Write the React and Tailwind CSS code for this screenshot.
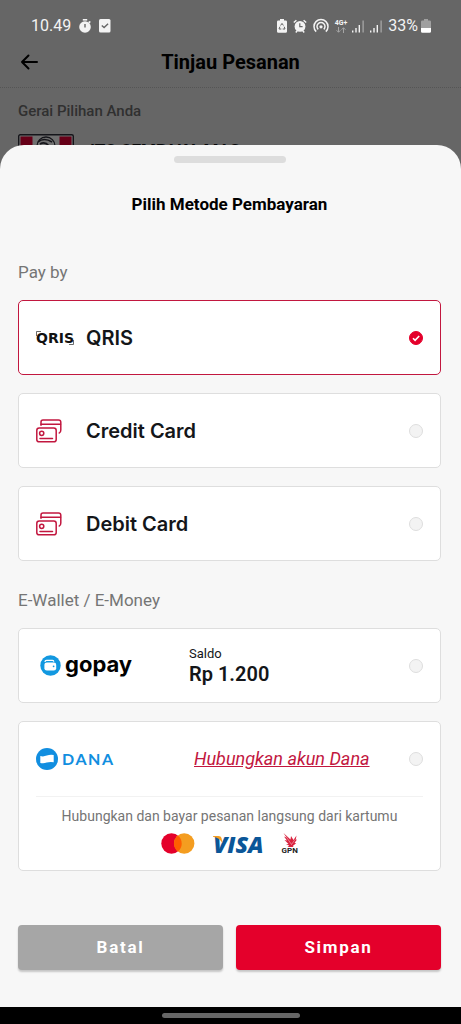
import React, { useState } from "react";

const cardMethods = [
  { id: "qris", name: "QRIS" },
  { id: "credit", name: "Credit Card" },
  { id: "debit", name: "Debit Card" },
];

function SignalIcon() {
  return (
    <svg width="13" height="13" viewBox="0 0 13 13" fill="#f3f3f3">
      <rect x="0" y="10.500" width="1.400" height="2" />
      <rect x="3.300" y="8" width="1.400" height="4.500" />
      <rect x="6.600" y="5" width="1.400" height="7.500" />
      <rect x="10.300" y="0.500" width="1.700" height="12" opacity="0.35" />
    </svg>
  );
}

function StatusBar() {
  return (
    <div className="flex items-center justify-between h-[52px] pl-[31px] pr-[30px] text-[#f3f3f3]">
      <div className="flex items-center gap-2">
        <span className="text-base">10.49</span>
        <svg width="12" height="14" viewBox="0 0 12 14">
          <circle cx="6" cy="8" r="5.8" fill="#f3f3f3" />
          <rect x="3.8" y="0" width="4.4" height="1.6" fill="#f3f3f3" />
          <rect x="9.6" y="2" width="1.8" height="2" fill="#f3f3f3" transform="rotate(20 10 3)" />
          <path d="M6 5v3.4" stroke="#666" strokeWidth="1.4" />
        </svg>
        <svg width="12" height="14" viewBox="0 0 12 14">
          <rect width="11.5" height="13.6" rx="1.5" fill="#f3f3f3" />
          <path d="M2.8 6.4l2.3 2.2 4-3.8" fill="none" stroke="#666" strokeWidth="1.4" />
        </svg>
      </div>
      <div className="flex items-center gap-[5px]">
        <svg width="10" height="14" viewBox="0 0 10 14">
          <path d="M3 0h4v1.4h1.6Q10 1.4 10 2.8v9.6q0 1.4-1.4 1.4H1.4Q0 13.800 0 12.400V2.800Q0 1.400 1.400 1.400H3z" fill="#f3f3f3" />
          <path d="M3.600 6.500L5 4.400l1.400 2.100M7.200 7.700l.8 2.300H5.700M4.300 10H2l.9-2.300" fill="none" stroke="#666" strokeWidth="1" />
        </svg>
        <svg className="ml-px" width="14" height="14" viewBox="0 0 14 14">
          <circle cx="7" cy="7.400" r="5.400" fill="#f3f3f3" />
          <path d="M.8 3.500L3.400 1.200M13.200 3.500L10.600 1.200M2.800 13.500l1.400-1.700M11.200 13.500l-1.400-1.700" stroke="#f3f3f3" strokeWidth="1.500" />
          <path d="M6.800 4.200v3.500h2.800" fill="none" stroke="#666" strokeWidth="1.200" />
        </svg>
        <svg width="18" height="16" viewBox="0 0 18 16" fill="none" stroke="#f3f3f3" strokeWidth="1.500">
          <path d="M4.200 13.600A7 7 0 1 1 13.800 13.600" />
          <path d="M6.200 11.400A4 4 0 1 1 11.800 11.400" />
          <circle cx="9" cy="8.800" r="1.600" fill="#f3f3f3" stroke="none" />
        </svg>
        <div className="flex flex-col items-center">
          <span className="text-[7px] leading-[7px] font-bold">4G+</span>
          <svg width="10" height="6" viewBox="0 0 10 6" fill="none" stroke="#a5a5a5" strokeWidth="1">
            <path d="M2.500 0v5M.6 3.300l1.900 2 1.900-2M7.500 6V1M5.600 2.700l1.900-2 1.900 2" />
          </svg>
        </div>
        <SignalIcon />
        <SignalIcon />
        <span className="text-base flex items-center gap-[3px]">
          33%
          <svg width="10" height="14" viewBox="0 0 10 14">
            <path d="M3 0h4v1.400h1.600Q10 1.400 10 2.800V9H0V2.800Q0 1.400 1.400 1.400H3z" fill="#a0a0a0" />
            <path d="M0 9h10v3.400q0 1.400-1.400 1.400H1.400Q0 13.800 0 12.400z" fill="#fff" />
          </svg>
        </span>
      </div>
    </div>
  );
}

// the page that stays dimmed behind the sheet
function OrderPage() {
  return (
    <div className="bg-[#666666]">
      <StatusBar />
      <header className="flex items-center h-9 px-5 pb-4 border-b border-dotted border-[#555555]">
        <button type="button" aria-label="Kembali">
          <svg width="19" height="16" viewBox="0 0 19 16" fill="none" stroke="black" strokeWidth="2" strokeLinecap="round" strokeLinejoin="round">
            <path d="M17 8H2M8.500 1.500L2 8l6.500 6.500" />
          </svg>
        </button>
        <h1 className="flex-1 text-center text-xl leading-6 font-bold text-black pr-[19px]">Tinjau Pesanan</h1>
      </header>
      <div className="px-[18px] pt-[13px]">
        <p className="text-[15px] leading-5 font-medium text-[#303030]">Gerai Pilihan Anda</p>
        <div className="flex mt-[13px] gap-4 items-start h-9">
          <svg width="56" height="36" viewBox="0 0 56 36">
            <rect x=".7" y=".7" width="54.600" height="34.600" rx="1.500" fill="#707070" stroke="#15151a" strokeWidth="1.400" />
            <rect x="2.500" y="2.500" width="12" height="32" fill="#670018" />
            <rect x="41.500" y="2.500" width="12" height="32" fill="#670018" />
            <circle cx="28" cy="12" r="9" fill="none" stroke="#15151a" strokeWidth="1.300" />
            <path d="M20 8q6-5 14 0M22 10q5-3 9 2" fill="none" stroke="#15151a" strokeWidth="1.500" />
          </svg>
          <p className="pt-1 text-[17px] leading-6 font-bold text-[#07080a]">ITC CEMPAKA MAS</p>
        </div>
      </div>
    </div>
  );
}

function QrisLogo() {
  return (
    <span className="relative inline-flex text-sm leading-[14px] font-bold text-[#111111] font-['DejaVu_Sans',sans-serif]">
      QRIS
      <svg className="absolute inset-0 w-full h-full" viewBox="0 0 38 14" preserveAspectRatio="none" fill="none" stroke="#444" strokeWidth=".8">
        <path d="M.5 5V.5H5M37.500 9v4.500H33" />
      </svg>
    </span>
  );
}

function CardsIcon() {
  return (
    <svg width="26" height="24" viewBox="0 0 26 24" fill="none" stroke="#c2173f" strokeWidth="1.500" strokeLinecap="round">
      <path d="M5 6.300V3Q5 1 7 1h15.500Q24.800 1 24.800 3.200V11q0 2.500-1.500 3" />
      <path d="M5 5.300h19.500" />
      <rect x=".8" y="9" width="19.400" height="13.800" rx="2.400" />
      <circle cx="5.700" cy="14.300" r="2.100" />
      <path d="M4 19.400h12.500" />
    </svg>
  );
}

function GopayLogo() {
  return (
    <span className="flex items-center gap-1 pl-1">
      <svg width="21" height="21" viewBox="0 0 21 21">
        <circle cx="10.500" cy="10.500" r="10.200" fill="#1298e0" />
        <path d="M5 7Q5 5.400 6.500 5.400h6q1.300 0 1.300 1.300" fill="none" stroke="#fff" strokeWidth="1.200" />
        <rect x="4.400" y="7.400" width="11.800" height="8.200" rx="2.400" fill="#fff" />
        <circle cx="13.600" cy="11.300" r=".9" fill="#1298e0" />
      </svg>
      <span className="text-[22px] leading-6 font-bold text-black font-['Inter',sans-serif] pb-[3px]">gopay</span>
    </span>
  );
}

function DanaLogo() {
  return (
    <span className="flex items-center gap-1">
      <svg width="22" height="22" viewBox="0 0 22 22">
        <circle cx="11" cy="11" r="11" fill="#118ee0" />
        <path d="M4.300 8q3 1 6.500-.4 3.400-1.400 6.900-.6v7.200q-3.500-.8-7 .4-3.300 1.300-6.400.3z" fill="#fff" />
      </svg>
      <span className="text-base leading-5 font-bold tracking-widest text-[#118ee0] font-['Lato',sans-serif]">DANA</span>
    </span>
  );
}

function PayRadio({ id, value, selected, onSelect }) {
  return (
    <span className="relative ml-auto flex w-[14px] h-[14px] shrink-0">
      <input
        id={id}
        type="radio"
        name="payment"
        value={value}
        checked={selected}
        onChange={() => onSelect(value)}
        className="appearance-none w-[14px] h-[14px] rounded-full border border-[#dedede] bg-[#f3f3f3] checked:bg-[#e4002b] checked:border-[#e4002b]"
      />
      {selected && (
        <svg className="absolute inset-0 pointer-events-none" width="14" height="14" viewBox="0 0 14 14">
          <path d="M4 7.200l2.100 2.100L10.200 5" fill="none" stroke="#fff" strokeWidth="1.600" />
        </svg>
      )}
    </span>
  );
}

function App() {
  const [method, setMethod] = useState("qris");

  return (
    <div className="min-h-screen flex flex-col bg-[#666666] font-['Roboto',sans-serif]">
      <OrderPage />

      <main className="relative -mt-[25px] flex-1 flex flex-col bg-[#f7f7f7] rounded-t-[24px] pl-[18px] pr-5 pt-[11px] pb-[37px]">
        <div className="w-28 h-[7px] mx-auto rounded-full bg-[#dddddd]"></div>
        <h2 className="mt-[29px] text-center text-[17px] leading-6 font-bold text-black">Pilih Metode Pembayaran</h2>

        <h3 className="mt-11 text-[17px] leading-6 text-[#757575]">Pay by</h3>
        <div className="mt-4 flex flex-col gap-[18px]">
          {cardMethods.map((item) => (
            <label
              key={item.id}
              htmlFor={item.id}
              className={`flex items-center h-[75px] px-[17px] rounded-[5px] border bg-white ${method === item.id ? "border-[#c2173f]" : "border-[#dedede]"}`}
            >
              <span className="w-[50px] flex">{item.id === "qris" ? <QrisLogo /> : <CardsIcon />}</span>
              <span className="text-xl leading-6 font-semibold text-[#141619] font-['Inter',sans-serif]">{item.name}</span>
              <PayRadio id={item.id} value={item.id} selected={method === item.id} onSelect={setMethod} />
            </label>
          ))}
        </div>

        <h3 className="mt-[27px] text-[17px] leading-6 text-[#757575]">E-Wallet / E-Money</h3>
        <div className="mt-4 flex flex-col gap-[18px]">
          <label htmlFor="gopay" className={`flex items-center h-[75px] px-[17px] rounded-[5px] border bg-white ${method === "gopay" ? "border-[#c2173f]" : "border-[#dedede]"}`}>
            <span className="w-[153px]"><GopayLogo /></span>
            <span className="flex flex-col text-[#141619]">
              <span className="text-[13px] leading-4">Saldo</span>
              <span className="text-xl leading-6 font-semibold">Rp 1.200</span>
            </span>
            <PayRadio id="gopay" value="gopay" selected={method === "gopay"} onSelect={setMethod} />
          </label>

          <div className={`px-[17px] pb-4 rounded-[5px] border bg-white ${method === "dana" ? "border-[#c2173f]" : "border-[#dedede]"}`}>
            <div className="flex items-center h-[75px] border-b border-[#f2f2f2]">
              <label htmlFor="dana" className="w-[158px]"><DanaLogo /></label>
              <a href="#dana" className="text-lg leading-6 italic underline text-[#c2173f]">Hubungkan akun Dana</a>
              <PayRadio id="dana" value="dana" selected={method === "dana"} onSelect={setMethod} />
            </div>
            <p className="mt-[9px] text-center text-sm leading-5 text-[#757575]">Hubungkan dan bayar pesanan langsung dari kartumu</p>
            <div className="mt-[7px] flex items-center justify-center gap-[18px] h-[21px]">
              <svg width="34" height="21" viewBox="0 0 34 21" role="img" aria-label="Mastercard">
                <circle cx="10.500" cy="10.500" r="10.200" fill="#e4002b" />
                <circle cx="23.200" cy="10.500" r="10.200" fill="#f49d20" />
                <path d="M16.850 2.500a10.200 10.200 0 0 1 0 16 10.200 10.200 0 0 1 0-16z" fill="#ff5f00" />
              </svg>
              <span className="relative text-[23px] leading-5 font-extrabold italic text-[#0b5698] font-['Open_Sans',sans-serif]">
                VISA
                <svg className="absolute left-0 top-[2px]" width="10" height="7" viewBox="0 0 10 7">
                  <path d="M0 0h5.500Q8 0 8.500 2l1 5Q6.500 1.800 0 .7z" fill="#f49d20" />
                </svg>
              </span>
              <span className="flex flex-col items-center">
                <svg width="14" height="14" viewBox="0 0 14 14">
                  <path d="M.5 0l7 6.500L8 3l2.500 4L13.500 2.500l-.8 4.300 1.300-.3-2.500 3.500 1.700.3-3.500 2.700 1 1H4.500l1.800-1.500-3.300-1 2.500-.5L1.500 7l2.500.4L1 3.500l2.500 1z" fill="#d9233f" />
                  <path d="M3 3.500l5.500 8 3.500-5" stroke="#fff" strokeWidth=".4" fill="none" />
                </svg>
                <span className="text-[8px] leading-[7px] font-bold text-[#222222]">GPN</span>
              </span>
            </div>
          </div>
        </div>

        <div className="mt-auto pt-8 grid grid-cols-2 gap-[13px]">
          <button type="button" className="h-[45px] rounded-[4px] bg-[#a6a6a6] text-white text-[17px] font-bold tracking-widest shadow-[0_2px_2px_rgba(0,0,0,0.2)]">Batal</button>
          <button type="button" className="h-[45px] rounded-[4px] bg-[#e4002b] text-white text-[17px] font-bold tracking-widest shadow-[0_2px_2px_rgba(0,0,0,0.2)]">Simpan</button>
        </div>
      </main>

      <footer className="h-[17px] flex items-center justify-center bg-black">
        <div className="w-[138px] h-[5px] rounded-full bg-[#666666]"></div>
      </footer>
    </div>
  );
}

export default App;
